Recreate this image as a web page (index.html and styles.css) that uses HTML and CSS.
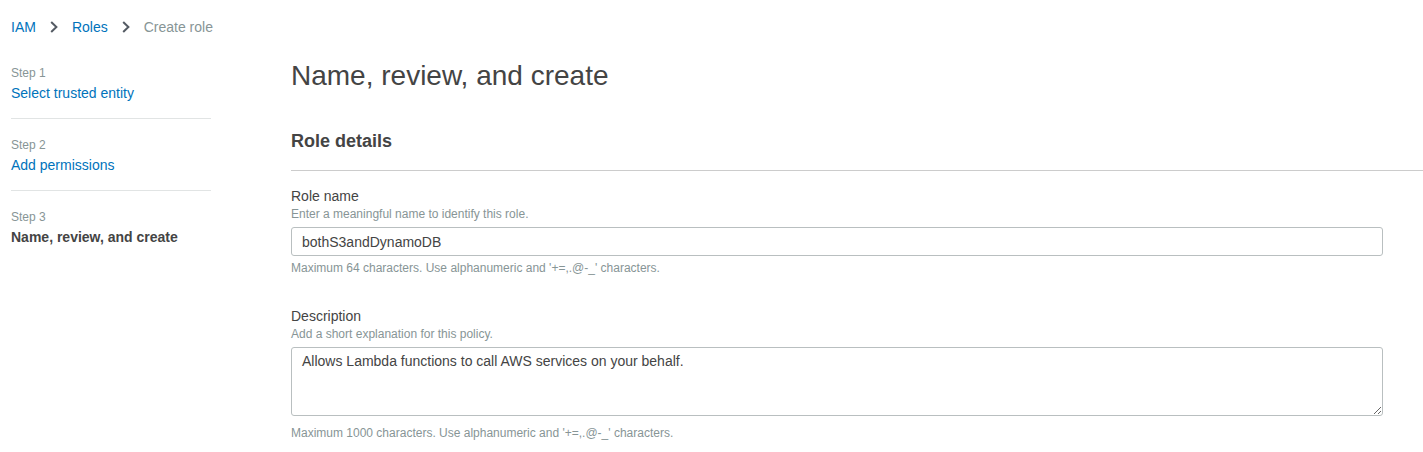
FILE: index.html
```html
<!DOCTYPE html>
<html lang="en">
<head>
<meta charset="utf-8">
<title>Create role</title>
<link rel="stylesheet" href="styles.css">
</head>
<body>
<div class="page">
  <nav class="breadcrumb">
    <a class="crumb-link" href="#">IAM</a>
    <svg class="crumb-sep" width="8" height="12" viewBox="0 0 8 12"><path d="M1.2 1 L6.4 6 L1.2 11" fill="none" stroke="#545b64" stroke-width="2"/></svg>
    <a class="crumb-link" href="#">Roles</a>
    <svg class="crumb-sep" width="8" height="12" viewBox="0 0 8 12"><path d="M1.2 1 L6.4 6 L1.2 11" fill="none" stroke="#545b64" stroke-width="2"/></svg>
    <span class="crumb-current">Create role</span>
  </nav>

  <div class="layout">
    <aside class="steps">
      <div class="step">
        <div class="step-label">Step 1</div>
        <a class="step-link" href="#">Select trusted entity</a>
      </div>
      <hr class="step-divider">
      <div class="step">
        <div class="step-label">Step 2</div>
        <a class="step-link" href="#">Add permissions</a>
      </div>
      <hr class="step-divider">
      <div class="step">
        <div class="step-label">Step 3</div>
        <div class="step-current">Name, review, and create</div>
      </div>
    </aside>

    <main class="content">
      <h1 class="page-title">Name, review, and create</h1>
      <h2 class="section-title">Role details</h2>
      <hr class="section-divider">

      <div class="field">
        <label class="field-label" for="role-name">Role name</label>
        <div class="field-help">Enter a meaningful name to identify this role.</div>
        <input class="text-input" id="role-name" type="text" value="bothS3andDynamoDB">
        <div class="field-constraint first">Maximum 64 characters. Use alphanumeric and '+=,.@-_' characters.</div>
      </div>

      <div class="field field-desc">
        <label class="field-label" for="role-desc">Description</label>
        <div class="field-help">Add a short explanation for this policy.</div>
        <textarea class="text-area" id="role-desc">Allows Lambda functions to call AWS services on your behalf.</textarea>
        <div class="field-constraint second">Maximum 1000 characters. Use alphanumeric and '+=,.@-_' characters.</div>
      </div>
    </main>
  </div>
</div>
</body>
</html>
```

FILE: styles.css
```css
* { box-sizing: border-box; }

html, body {
  margin: 0;
  padding: 0;
  background: #ffffff;
}

body {
  font-family: "Liberation Sans", Arial, sans-serif;
  font-size: 14px;
  line-height: 20px;
  color: #444444;
}

a { text-decoration: none; }

.page {
  padding-left: 11px;
}

.breadcrumb {
  display: flex;
  align-items: center;
  padding-top: 17px;
  height: 37px;
  line-height: 20px;
}

.crumb-link { color: #0073bb; }

.crumb-sep {
  display: block;
  margin: 0 14px;
}

.crumb-current { color: #879596; }

.layout {
  display: grid;
  grid-template-columns: 200px 1fr;
  column-gap: 80px;
  align-items: start;
}

.steps {
  margin-top: 28px;
}

.step-label {
  font-size: 12px;
  line-height: 16px;
  color: #879596;
}

.step-link {
  display: block;
  margin-top: 2px;
  color: #0073bb;
  line-height: 20px;
}

.step-current {
  margin-top: 2px;
  font-weight: bold;
  color: #444444;
  line-height: 20px;
}

.step-divider {
  border: 0;
  border-top: 1px solid #e1e4e4;
  margin: 15px 0 18px;
}

.content {
  margin-top: 21px;
}

.page-title {
  margin: 0;
  font-size: 28px;
  font-weight: normal;
  line-height: 36px;
  color: #444444;
}

.section-title {
  margin: 35px 0 0;
  font-size: 18px;
  font-weight: bold;
  line-height: 24px;
  color: #444444;
}

.section-divider {
  border: 0;
  border-top: 1px solid #cccccc;
  margin: 17px 0 0;
}

.field {
  padding-right: 40px;
}

.field-label {
  display: block;
  margin-top: 15px;
  font-size: 14px;
  line-height: 20px;
  color: #444444;
}

.field-desc .field-label {
  margin-top: 30px;
}

.field-help {
  font-size: 12px;
  line-height: 16px;
  color: #879596;
}

.text-input,
.text-area {
  display: block;
  width: 100%;
  margin-top: 5px;
  font-family: "Liberation Sans", Arial, sans-serif;
  font-size: 14px;
  color: #444444;
  border: 1px solid #b9bfc0;
  border-radius: 3px;
  background: #ffffff;
  outline: none;
}

.text-input {
  height: 29px;
  padding: 0 10px;
  line-height: 20px;
}

.text-area {
  height: 69px;
  padding: 3px 10px;
  line-height: 20px;
  resize: vertical;
}

.field-constraint {
  font-size: 12px;
  line-height: 16px;
  color: #879596;
}

.field-constraint.first { margin-top: 4px; }
.field-constraint.second { margin-top: 9px; }
```
